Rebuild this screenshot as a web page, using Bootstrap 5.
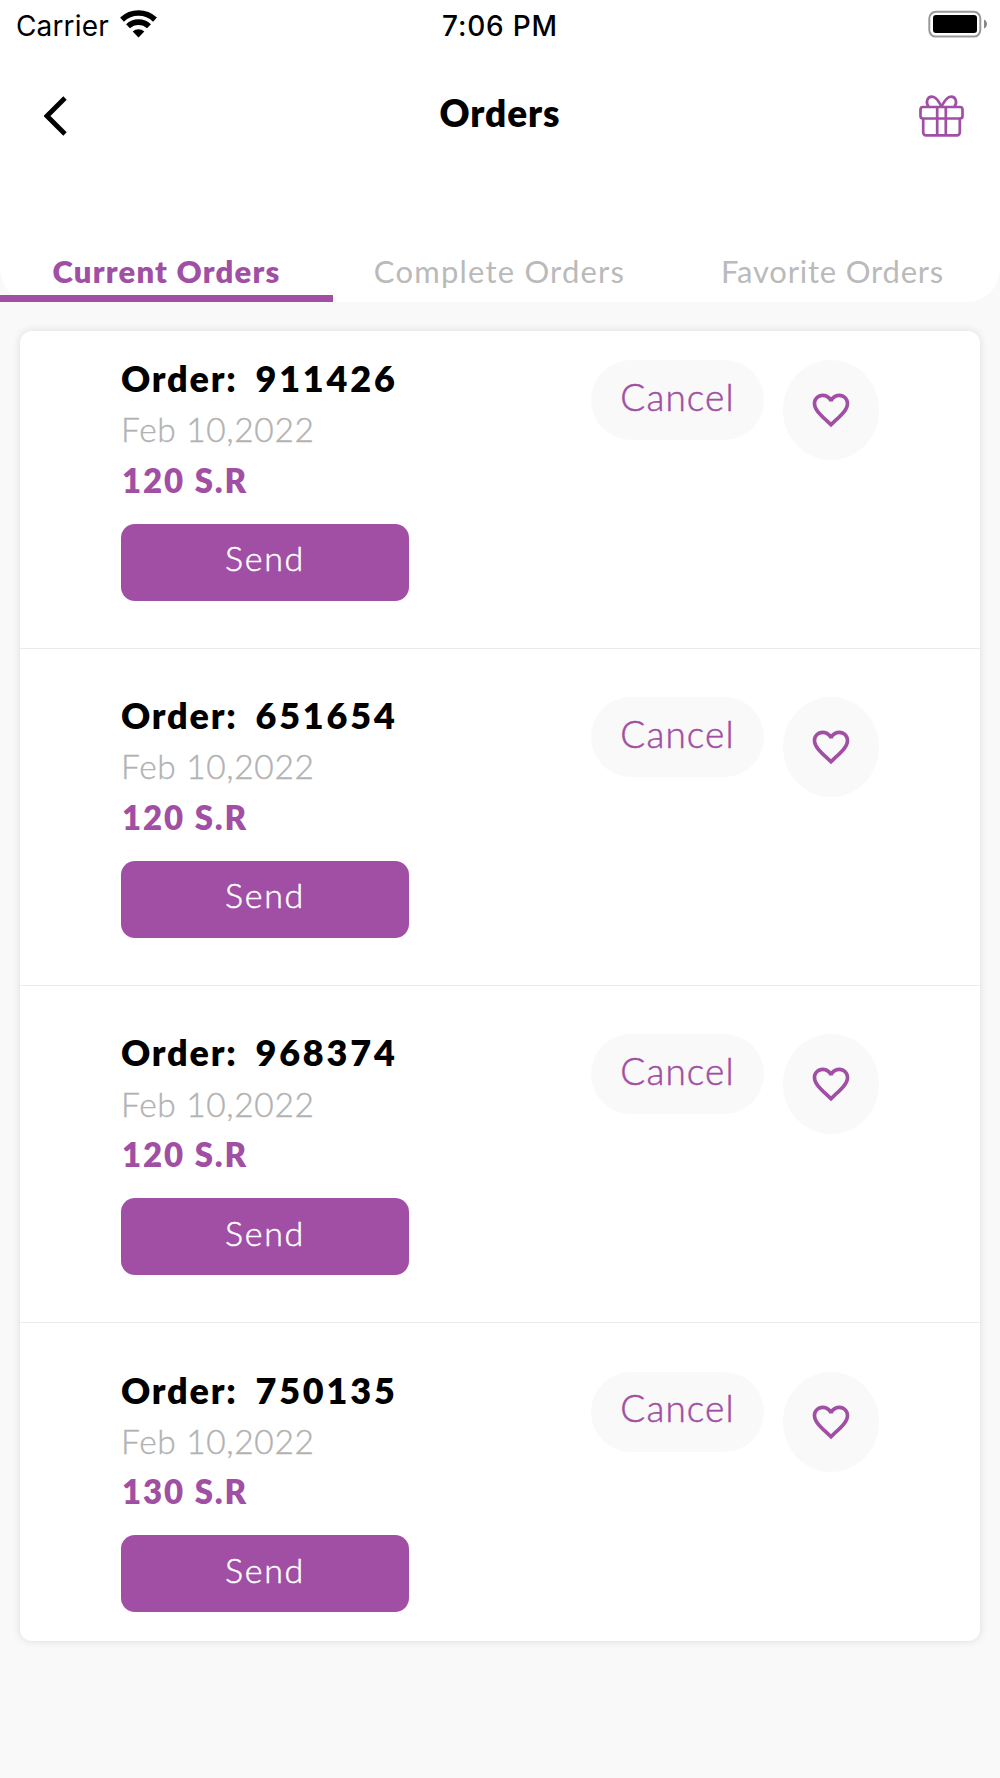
<!DOCTYPE html>
<html lang="en">
<head>
<meta charset="utf-8">
<meta name="viewport" content="width=device-width, initial-scale=1">
<title>Orders</title>
<link rel="stylesheet" href="https://cdn.jsdelivr.net/npm/bootstrap@5.3.0/dist/css/bootstrap.min.css">
<style>
:root{--brand:#a14fa4;--muted:#bababa;--page:#f9f9f9}
body{background:var(--page);font-family:Lato,"Open Sans",sans-serif;color:#000;width:1000px;min-height:1778px}
.top-area{height:302px;background:#fff;border-radius:0 0 33px 33px}
.status-bar{height:50px;padding:0 13px 0 16px;font-family:Inter,sans-serif;font-size:28px;line-height:52px}
.status-side{width:300px}
.status-side svg{margin-top:10px}
.status-side:first-child{width:303px;margin-right:-6px}
.carrier{letter-spacing:.15px;width:104px}
.clock{font-weight:500;letter-spacing:.8px}
.title-bar{height:128px;padding:4px 36px 0 44px}
.title-side{width:100px}
.title-side:first-child{width:92px}
.page-title{font-size:37px;font-weight:800;line-height:50px;letter-spacing:.9px;margin:-7px 0 0}
.tab-row{height:124px}
.tab-row .nav-link{width:333px;height:124px;display:flex;align-items:flex-end;justify-content:center;border:0;border-radius:0;color:var(--muted);font-size:31px;line-height:46px;padding:0 0 8px;letter-spacing:1.2px}
.tab-row .nav-link:last-child{letter-spacing:.8px}
.tab-row .nav-link.active{color:var(--brand);font-weight:800;border-bottom:7px solid var(--brand);padding-bottom:1px;letter-spacing:1.2px}
.order-card{margin:29px 20px 0;border:0;border-radius:12px;box-shadow:0 0 9px rgba(0,0,0,.12);background:#fff;height:1309.5px}
.order-item{height:337.2px;padding:40.4px 101px 0;border:0;border-bottom:1.5px solid #ebebeb}
.order-item:first-child{height:317.8px;padding-top:21px}
.order-item:last-child{height:317.3px;border-bottom:0}
.order-item p{margin:0;line-height:51.3px;white-space:pre}
.order-item .order-no{font-size:36px;font-weight:800;letter-spacing:1.8px;word-spacing:-1.2px;padding-top:1px;margin-bottom:-1px}
.order-no span{letter-spacing:2.8px}
.order-item .order-date{font-size:33.5px;font-weight:300;color:#b2b2b2;letter-spacing:.65px;-webkit-text-stroke:.4px #b2b2b2;padding-top:1px;margin-bottom:-1px}
.order-item .order-price{font-size:33px;font-weight:800;color:var(--brand);letter-spacing:1.9px;padding-left:1px}
.btn-send,.btn-send:hover{display:block;width:288px;height:77px;margin-top:17.8px;border:0;border-radius:14px;background:var(--brand);color:#fff;font-size:34px;font-weight:300;line-height:68px;padding:0 0 8px;letter-spacing:1.7px;-webkit-text-stroke:.5px #fff}
.order-actions{padding:8px 0 0;gap:19px}
.btn-cancel{width:173px;height:80px;border:0;border-radius:40px;background:var(--page);color:var(--brand);font-size:37px;font-weight:300;line-height:70px;padding:0 0 7px;letter-spacing:1.1px;-webkit-text-stroke:.5px var(--brand)}
.btn-fav{width:96px;height:100px;border:0;border-radius:50%;background:var(--page);padding:0;display:flex;align-items:center;justify-content:center}
</style>
</head>
<body>
<svg class="d-none" xmlns="http://www.w3.org/2000/svg">
<symbol id="heart" viewBox="0 0 24 24"><path d="M16.5 3c-1.74 0-3.41.81-4.5 2.09C10.91 3.81 9.24 3 7.5 3 4.42 3 2 5.42 2 8.5c0 3.78 3.4 6.86 8.55 11.54L12 21.35l1.45-1.32C18.6 15.36 22 12.28 22 8.5 22 5.42 19.58 3 16.5 3zm-4.4 15.55l-.1.1-.1-.1C7.14 14.24 4 11.39 4 8.5 4 6.5 5.5 5 7.5 5c1.54 0 3.04.99 3.57 2.36h1.87C13.46 5.99 14.96 5 16.5 5c2 0 3.5 1.5 3.5 3.5 0 2.89-3.14 5.74-7.9 10.05z"/></symbol>
</svg>
<header class="top-area">
  <div class="status-bar d-flex justify-content-between">
    <div class="status-side d-flex"><span class="carrier">Carrier</span>
      <svg width="37" height="28" viewBox="0 0 37 28"><g fill="none" stroke="#000" stroke-width="5.6"><path d="M2 9.600a24 24 0 0 1 33 0"/><path d="M8 16.300a15.200 15.200 0 0 1 21 0"/></g><path d="M18.500 27.500l-5.800-5.900a8.500 8.500 0 0 1 11.600 0z"/></svg>
    </div>
    <div class="clock">7:06 PM</div>
    <div class="status-side d-flex justify-content-end">
      <svg width="59" height="28" viewBox="0 0 59 28"><rect x="1.300" y="1.800" width="51" height="24.800" rx="6.500" fill="none" stroke="#999" stroke-width="2"/><rect x="5" y="5" width="44" height="18" rx="3"/><path d="M56 9.500c4 1.700 4 7.500 0 9.200z" fill="#888"/></svg>
    </div>
  </div>
  <div class="title-bar d-flex justify-content-between align-items-center">
    <div class="title-side"><svg width="23" height="40" viewBox="0 0 23 40"><path d="M21 2L3 20l18 18" fill="none" stroke="#000" stroke-width="4.800"/></svg></div>
    <h1 class="page-title">Orders</h1>
    <div class="title-side d-flex justify-content-end">
      <svg width="45" height="42" viewBox="0 0 45 42" fill="none" stroke="#a14fa4" stroke-width="2.700" stroke-linejoin="round"><rect x="1.500" y="12" width="42" height="11.500" rx="2.500"/><path d="M4.200 23.500v14a2.800 2.800 0 0 0 2.800 2.800h31a2.800 2.800 0 0 0 2.800-2.800v-14M18.200 12v28M26.800 12v28M22.500 11.500C20 6.500 17 1.600 13 1.600c-5 0-6.500 6-3.500 10M22.500 11.500C25 6.500 28 1.600 32 1.600c5 0 6.500 6 3.500 10"/></svg>
    </div>
  </div>
  <nav class="nav tab-row flex-nowrap">
    <a class="nav-link active" href="#">Current Orders</a>
    <a class="nav-link" href="#">Complete Orders</a>
    <a class="nav-link" href="#">Favorite Orders</a>
  </nav>
</header>
<main class="card order-card">
  <div class="order-item d-flex justify-content-between">
    <div><p class="order-no">Order:  <span>911426</span></p><p class="order-date">Feb 10,2022</p><p class="order-price">120 S.R</p><button class="btn btn-send">Send</button></div>
    <div class="order-actions d-flex align-items-start"><button class="btn btn-cancel">Cancel</button><button class="btn btn-fav" aria-label="Favorite"><svg width="44" height="44" fill="#a14fa4"><use href="#heart"/></svg></button></div>
  </div>
  <div class="order-item d-flex justify-content-between">
    <div><p class="order-no">Order:  <span>651654</span></p><p class="order-date">Feb 10,2022</p><p class="order-price">120 S.R</p><button class="btn btn-send">Send</button></div>
    <div class="order-actions d-flex align-items-start"><button class="btn btn-cancel">Cancel</button><button class="btn btn-fav" aria-label="Favorite"><svg width="44" height="44" fill="#a14fa4"><use href="#heart"/></svg></button></div>
  </div>
  <div class="order-item d-flex justify-content-between">
    <div><p class="order-no">Order:  <span>968374</span></p><p class="order-date">Feb 10,2022</p><p class="order-price">120 S.R</p><button class="btn btn-send">Send</button></div>
    <div class="order-actions d-flex align-items-start"><button class="btn btn-cancel">Cancel</button><button class="btn btn-fav" aria-label="Favorite"><svg width="44" height="44" fill="#a14fa4"><use href="#heart"/></svg></button></div>
  </div>
  <div class="order-item d-flex justify-content-between">
    <div><p class="order-no">Order:  <span>750135</span></p><p class="order-date">Feb 10,2022</p><p class="order-price">130 S.R</p><button class="btn btn-send">Send</button></div>
    <div class="order-actions d-flex align-items-start"><button class="btn btn-cancel">Cancel</button><button class="btn btn-fav" aria-label="Favorite"><svg width="44" height="44" fill="#a14fa4"><use href="#heart"/></svg></button></div>
  </div>
</main>
<script src="https://cdn.jsdelivr.net/npm/bootstrap@5.3.0/dist/js/bootstrap.bundle.min.js"></script>
</body>
</html>
